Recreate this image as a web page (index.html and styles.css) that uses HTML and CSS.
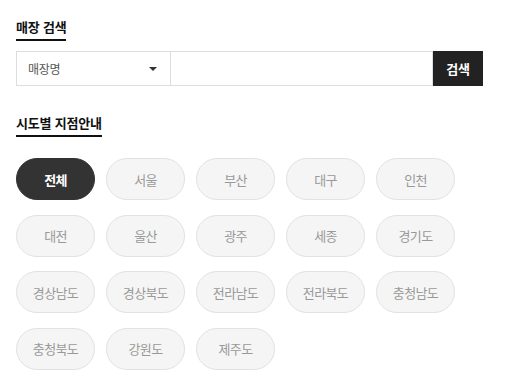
FILE: index.html
```html
<!DOCTYPE html>
<html lang="ko">
<head>
    <meta charset="UTF-8">
    <meta name="viewport" content="width=device-width, initial-scale=1.0">
    <title>매장 검색</title>
    <link rel="stylesheet" href="styles.css">
</head>
<body>
    <div class="store-wrap">
        <h2 class="sec-title">매장 검색</h2>
        <div class="search-row">
            <div class="select-box">
                <span>매장명</span>
                <i class="arrow"></i>
            </div>
            <input type="text" class="search-input">
            <button class="search-btn">검색</button>
        </div>

        <h2 class="sec-title sec-title--area">시도별 지점안내</h2>
        <ul class="area-list">
            <li class="area-item active">전체</li>
            <li class="area-item">서울</li>
            <li class="area-item">부산</li>
            <li class="area-item">대구</li>
            <li class="area-item">인천</li>
            <li class="area-item">대전</li>
            <li class="area-item">울산</li>
            <li class="area-item">광주</li>
            <li class="area-item">세종</li>
            <li class="area-item">경기도</li>
            <li class="area-item">경상남도</li>
            <li class="area-item">경상북도</li>
            <li class="area-item">전라남도</li>
            <li class="area-item">전라북도</li>
            <li class="area-item">충청남도</li>
            <li class="area-item">충청북도</li>
            <li class="area-item">강원도</li>
            <li class="area-item">제주도</li>
        </ul>
    </div>
</body>
</html>
```

FILE: styles.css
```css
body {
    margin: 0;
    background-color: #ffffff;
    color: #111111;
    font-family: "Noto Sans CJK KR", "Noto Sans", sans-serif;
}
.store-wrap {
    padding: 18px 16px 0 16px;
}
.sec-title {
    display: block;
    width: fit-content;
    margin: 0;
    font-size: 13px;
    line-height: 18px;
    font-weight: bold;
    letter-spacing: -0.2px;
    padding-bottom: 3px;
    border-bottom: 2px solid #111111;
}
.sec-title--area {
    margin-top: 28px;
}
.search-row {
    display: flex;
    width: 467px;
    height: 35px;
    margin-top: 10px;
}
.select-box {
    display: flex;
    align-items: center;
    justify-content: space-between;
    width: 155px;
    box-sizing: border-box;
    padding: 0 11px 0 11px;
    border: 1px solid #dddddd;
    font-size: 12px;
    letter-spacing: -0.3px;
    color: #555555;
}
.arrow {
    width: 0;
    height: 0;
    margin-right: 2px;
    border-left: 4px solid transparent;
    border-right: 4px solid transparent;
    border-top: 4px solid #333333;
}
.search-input {
    flex: 1;
    min-width: 0;
    margin: 0;
    padding: 0;
    border: 1px solid #dddddd;
    border-left: none;
    outline: none;
}
.search-btn {
    width: 50px;
    margin: 0;
    padding: 0;
    border: none;
    background-color: #222222;
    color: #ffffff;
    font-family: inherit;
    font-size: 13px;
    font-weight: bold;
    letter-spacing: -0.3px;
}
.area-list {
    list-style: none;
    margin: 21px 0 0 0;
    padding: 0;
    display: grid;
    grid-template-columns: repeat(5, 79px);
    column-gap: 11px;
    row-gap: 14.6px;
}
.area-item {
    height: 42px;
    box-sizing: border-box;
    display: flex;
    align-items: center;
    justify-content: center;
    border: 1px solid #e2e2e2;
    border-radius: 21px;
    background-color: #f5f5f5;
    color: #999999;
    font-size: 13px;
    letter-spacing: -0.6px;
}
.area-item.active {
    background-color: #333333;
    border-color: #333333;
    color: #ffffff;
    font-size: 13px;
    font-weight: bold;
}
```
